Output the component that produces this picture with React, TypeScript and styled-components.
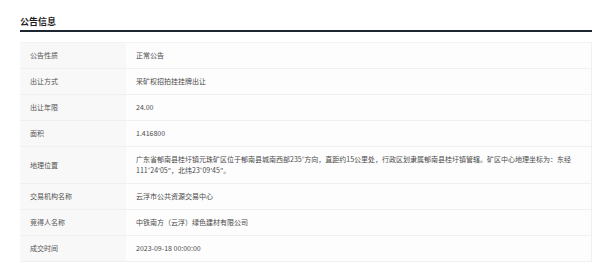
import React from "react";
import styled, { createGlobalStyle } from "styled-components";

const GlobalStyle = createGlobalStyle`
  html, body {
    margin: 0;
    padding: 0;
    background: #ffffff;
    font-family: "Noto Sans CJK SC", "Noto Sans", sans-serif;
  }
`;

const Page = styled.div`
  width: 600px;
  height: 268px;
  padding: 14px 8px 0 20px;
  box-sizing: border-box;
  overflow: hidden;
`;

const Header = styled.div`
  border-bottom: 2px solid #1e2632;
  padding-bottom: 1px;
  margin-bottom: 10px;
`;

const Title = styled.h2`
  margin: 0;
  font-size: 9px;
  line-height: 15px;
  font-weight: 700;
  color: #1f1f1f;
`;

const Table = styled.div`
  display: grid;
  grid-template-columns: 106px 1fr;
  border-right: 1px solid #f0f0f0;
  border-bottom: 1px solid #f0f0f0;
  border-top: 1px solid #f3f3f3;
`;

const Cell = styled.div<{ $label?: boolean; $last?: boolean }>`
  padding: 7px ${(p) => (p.$label ? "10px" : "8px")} 7px 10px;
  font-size: 7px;
  line-height: 11px;
  color: ${(p) => (p.$label ? "#555" : "#4a4a4a")};
  background: ${(p) => (p.$label ? "#f8f8f8" : "#fdfdfd")};
  border-bottom: ${(p) => (p.$last ? "none" : "1px solid #f0f0f0")};
  display: flex;
  align-items: center;
`;

const rows: [string, string][] = [
  ["公告性质", "正常公告"],
  ["出让方式", "采矿权招拍挂挂牌出让"],
  ["出让年限", "24.00"],
  ["面积", "1.416800"],
  [
    "地理位置",
    "广东省郁南县桂圩镇元珠矿区位于郁南县城南西部235°方向，直距约15公里处，行政区划隶属郁南县桂圩镇管辖。矿区中心地理坐标为：东经111°24′05″，北纬23°09′45″。",
  ],
  ["交易机构名称", "云浮市公共资源交易中心"],
  ["竞得人名称", "中铁南方（云浮）绿色建材有限公司"],
  ["成交时间", "2023-09-18 00:00:00"],
];

export default function App() {
  return (
    <Page>
      <GlobalStyle />
      <Header>
        <Title>公告信息</Title>
      </Header>
      <Table>
        {rows.map(([k, v], i) => (
          <React.Fragment key={k}>
            <Cell $label $last={i === rows.length - 1}>{k}</Cell>
            <Cell $last={i === rows.length - 1}>{v}</Cell>
          </React.Fragment>
        ))}
      </Table>
    </Page>
  );
}
